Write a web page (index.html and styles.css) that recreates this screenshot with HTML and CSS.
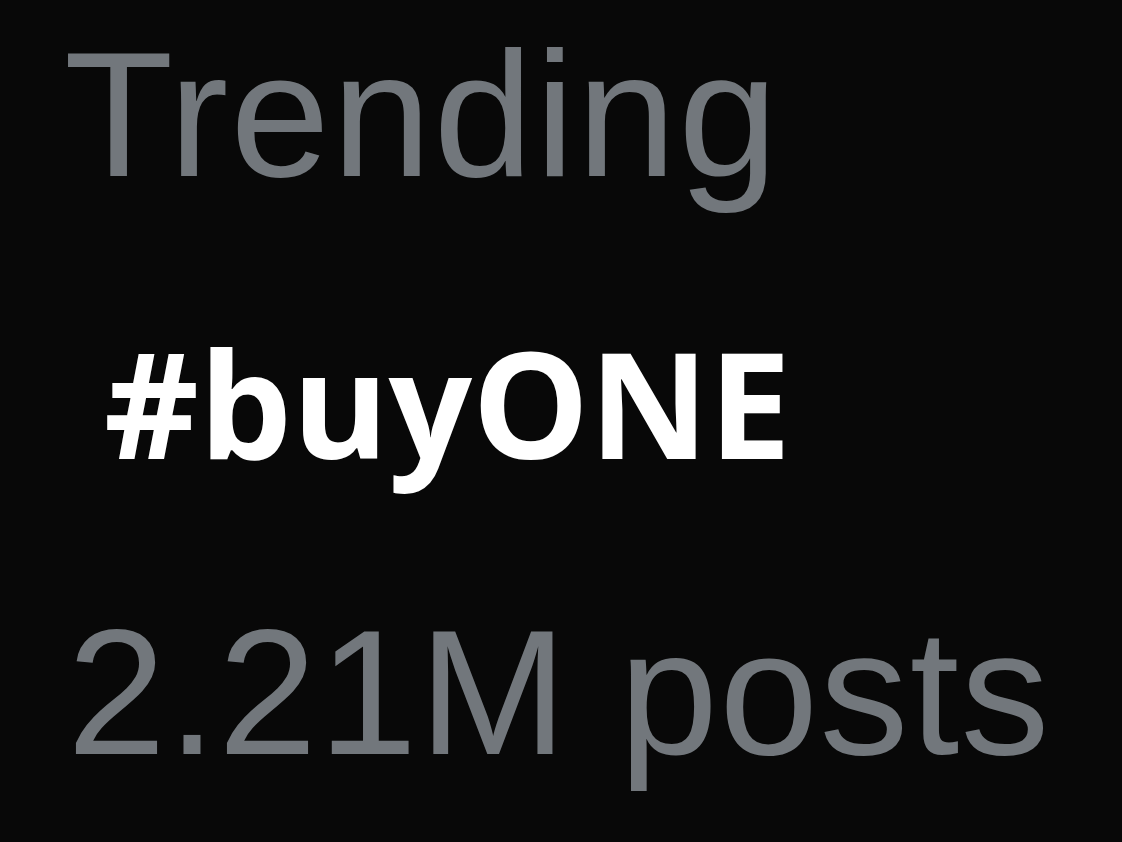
FILE: index.html
```html
<!DOCTYPE html>
<html lang="en">
<head>
<meta charset="utf-8">
<title>Trending #buyONE</title>
<link rel="stylesheet" href="styles.css">
</head>
<body>
<main class="trend">
  <div class="trend-label">Trending</div>
  <div class="trend-tag">#buyONE</div>
  <div class="trend-count">2.21M posts</div>
</main>
</body>
</html>
```

FILE: styles.css
```css
html, body {
  margin: 0;
  padding: 0;
  background: #080808;
}
body {
  width: 1122px;
  height: 842px;
  overflow: hidden;
}
.trend {
  display: flex;
  flex-direction: column;
  align-items: flex-start;
  padding: 25px 0 0 64px;
}
.trend-label,
.trend-count {
  font-family: "Liberation Sans", Arial, sans-serif;
  color: #72777c;
  line-height: 1;
  white-space: nowrap;
}
.trend-label {
  font-size: 179px;
  letter-spacing: 2px;
}
.trend-tag {
  font-family: "Open Sans", "Noto Sans", sans-serif;
  font-weight: 700;
  font-size: 147px;
  line-height: 1;
  color: #ffffff;
  margin: 125px 0 0 40px;
  white-space: nowrap;
}
.trend-count {
  font-size: 178px;
  letter-spacing: 1.3px;
  margin: 128px 0 0 3px;
}
```
